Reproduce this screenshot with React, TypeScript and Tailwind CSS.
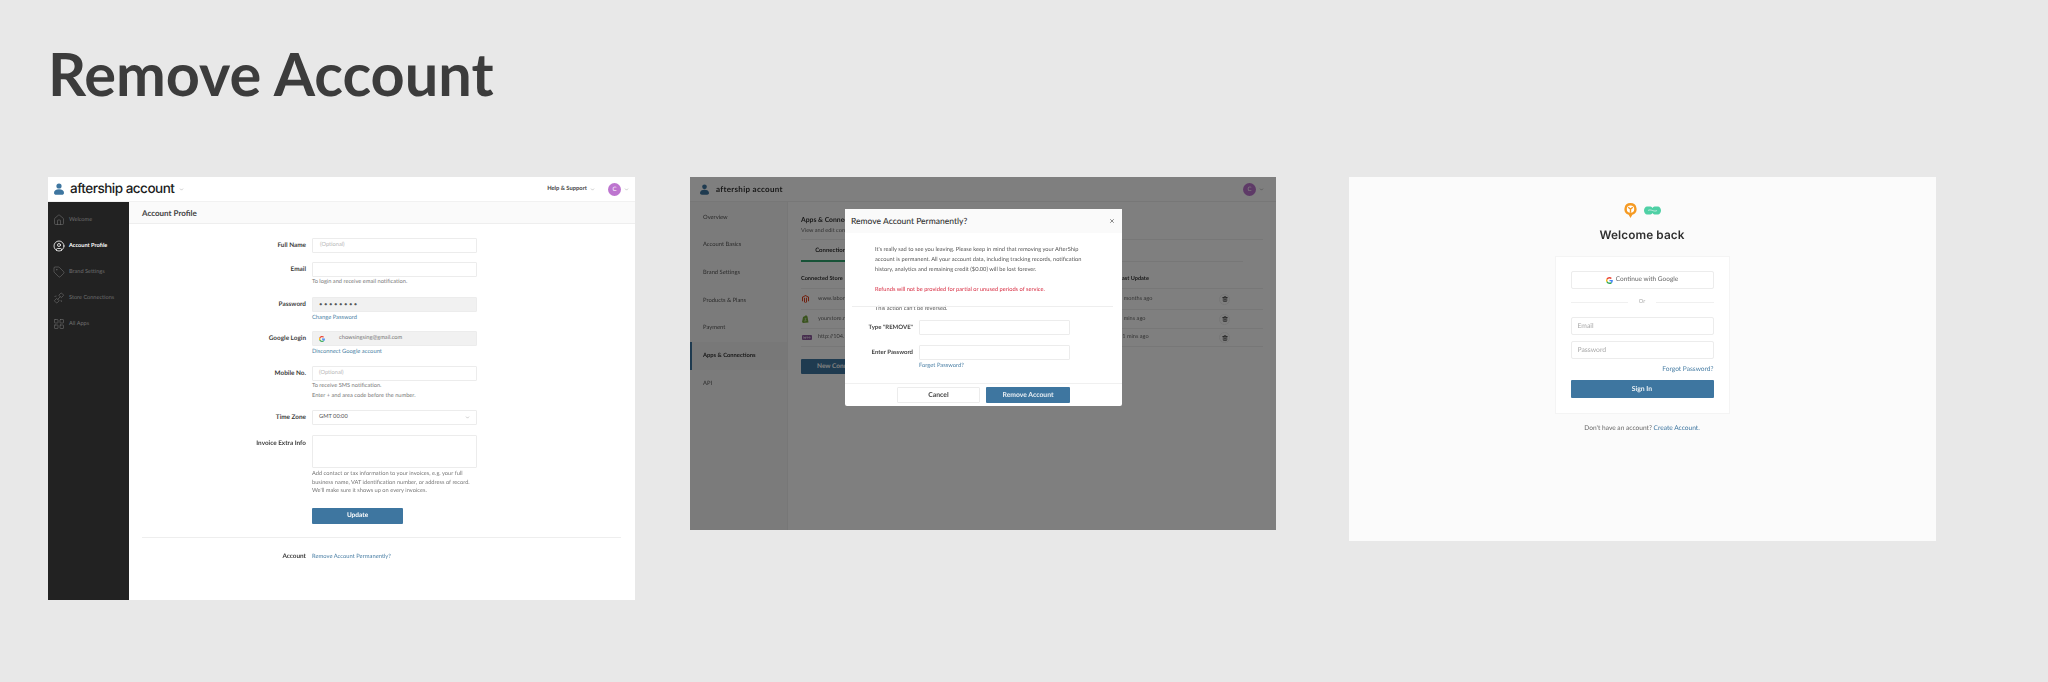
import React from "react";
import { ChevronDown, House, CircleUser, Tag, LayoutGrid, Trash2, X } from "lucide-react";

const Person = ({ className }: { className?: string }) => (
  <svg viewBox="0 0 20 24" className={className} fill="#3e76a0">
    <circle cx="10" cy="6" r="5.2" />
    <path d="M0 20c0-5 4-7.5 10-7.5S20 15 20 20c0 2.500-2 3.500-4 3.500H4C2 23.500 0 22.500 0 20z" />
  </svg>
);

const GoogleG = ({ className }: { className?: string }) => (
  <svg viewBox="0 0 48 48" className={className}>
    <path fill="#EA4335" d="M24 9.500c3.500 0 6.700 1.300 9.100 3.500l6.800-6.800C35.800 2.400 30.200 0 24 0 14.600 0 6.500 5.400 2.600 13.200l7.900 6.200C12.400 13.600 17.700 9.500 24 9.500z" />
    <path fill="#4285F4" d="M46.900 24.500c0-1.600-.2-3.100-.4-4.500H24v9h12.900c-.6 3-2.200 5.500-4.700 7.200l7.700 6c4.500-4.200 7-10.300 7-17.700z" />
    <path fill="#FBBC05" d="M10.500 28.600c-.5-1.400-.8-3-.8-4.600s.3-3.200.8-4.600l-7.900-6.200C.9 16.500 0 20.100 0 24s.9 7.500 2.600 10.800l7.900-6.200z" />
    <path fill="#34A853" d="M24 48c6.500 0 11.900-2.100 15.900-5.800l-7.700-6c-2.200 1.400-4.900 2.300-8.200 2.300-6.300 0-11.600-4.100-13.500-9.900l-7.900 6.200C6.500 42.600 14.600 48 24 48z" />
  </svg>
);

const StoreLink = ({ className, strokeWidth = 1.2 }: { className?: string; strokeWidth?: number }) => (
  <svg viewBox="0 0 24 24" className={className} fill="none" stroke="currentColor" strokeWidth={strokeWidth}>
    <rect x="13" y="3" width="7" height="7" rx="1" transform="rotate(45 16.500 6.500)" />
    <rect x="4" y="14" width="7" height="7" rx="1" transform="rotate(45 7.500 17.500)" />
    <path d="M9 15 15 9M3 9l4-1M16 16l1 4" />
  </svg>
);

const Chevron = ({ className }: { className?: string }) => <ChevronDown className={className} strokeWidth={2} />;

const Label = ({ children, top = "items-center" }: { children: React.ReactNode; top?: string }) => (
  <div className={`w-[177px] shrink-0 flex justify-end h-[15px] pt-px ${top} text-[6.400px] font-bold text-[#3a3a3a]`}>{children}</div>
);

const Help = ({ children }: { children: React.ReactNode }) => (
  <div className="text-[5.700px] leading-[10px] text-[#777]">{children}</div>
);

const LinkText = ({ children }: { children: React.ReactNode }) => (
  <div className="text-[5.800px] h-[10px] leading-[12px] text-[#4a7fa5]">{children}</div>
);

const Box = ({ children, gray }: { children?: React.ReactNode; gray?: boolean }) => (
  <div className={`w-[165px] h-[15px] rounded-[1px] border border-[#ececec] flex items-center text-[5.700px] ${gray ? "bg-[#f1f1f1] text-[#777]" : "bg-white text-[#b5b5b5]"}`}>
    {children}
  </div>
);

const Row = ({ label, children }: { label: string; children: React.ReactNode }) => (
  <div className="flex gap-[6px]">
    <Label>{label}</Label>
    <div className="flex flex-col">{children}</div>
  </div>
);

const navA = [
  { t: "Welcome", I: House },
  { t: "Account Profile", I: CircleUser, on: true },
  { t: "Brand Settings", I: Tag },
  { t: "Store Connections", I: StoreLink },
  { t: "All Apps", I: LayoutGrid },
];

const Profile = () => (
  <div className="w-[587px] h-[423px] bg-white flex flex-col shrink-0">
    <div className="h-[25px] flex items-center border-b border-[#f1f1f1] pl-[6px] pr-[6px]">
      <Person className="w-[10px] h-[12px]" />
      <span className="ml-[6px] pt-px text-[13.500px] tracking-[-0.5px] font-medium text-[#1c1c1c] font-['Inter',sans-serif]">aftership account</span>
      <Chevron className="ml-[5px] w-[5px] h-[5px] text-[#888]" />
      <span className="ml-auto text-[5.800px] font-bold text-[#444]">Help &amp; Support</span>
      <Chevron className="ml-[3px] w-[5px] h-[5px] text-[#888]" />
      <span className="ml-[13px] w-[13px] h-[13px] rounded-full bg-[#bd75cf] text-white text-[6px] flex items-center justify-center">C</span>
      <Chevron className="ml-[3px] w-[5px] h-[5px] text-[#888]" />
    </div>
    <div className="flex flex-1 min-h-0">
      <div className="w-[81px] bg-[#222222] flex flex-col pt-[5px]">
        {navA.map(({ t, I, on }) => (
          <div key={t} className={`h-[26px] flex items-center pl-[5px] gap-[4px] text-[5.600px] ${on ? "text-white font-bold" : "text-[#707070]"}`}>
            <I className="w-[12px] h-[12px]" strokeWidth={on ? 1.6 : 1.2} />
            <span>{t}</span>
          </div>
        ))}
      </div>
      <div className="flex-1 flex flex-col">
        <div className="h-[22px] pt-px bg-[#fafafa] border-b border-[#eeeeee] flex items-center pl-[13px] text-[8px] font-bold text-[#444]">Account Profile</div>
        <div className="flex flex-col gap-[9px] pt-[14px]">
          <Row label="Full Name"><Box><span className="pl-[7px]">(Optional)</span></Box></Row>
          <Row label="Email">
            <Box />
            <div className="pb-px"><Help>To login and receive email notification.</Help></div>
          </Row>
          <Row label="Password">
            <Box gray><span className="pl-[6px] text-[#555] text-[6px] tracking-[1.500px]">••••••••</span></Box>
            <LinkText>Change Password</LinkText>
          </Row>
          <Row label="Google Login">
            <Box gray>
              <GoogleG className="ml-[6px] w-[6px] h-[6px]" />
              <span className="ml-[14px]">chowsingsing@gmail.com</span>
            </Box>
            <div className="pb-px"><LinkText>Disconnect Google account</LinkText></div>
          </Row>
          <Row label="Mobile No.">
            <Box><span className="pl-[6px]">(Optional)</span></Box>
            <Help>To receive SMS notification.</Help>
            <Help>Enter + and area code before the number.</Help>
          </Row>
          <Row label="Time Zone">
            <Box><span className="pl-[6px] text-[#555]">GMT 00:00</span><Chevron className="ml-auto mr-[6px] w-[5px] h-[5px] text-[#888]" /></Box>
          </Row>
          <div className="flex gap-[6px] mt-[1px]">
            <Label top="items-start"><span className="mt-[3px]">Invoice Extra Info</span></Label>
            <div className="flex flex-col">
              <div className="w-[165px] h-[33px] border border-[#ececec] bg-white rounded-[1px]" />
              <div className="mt-[2px] w-[165px] text-[5.700px] leading-[8.700px] text-[#777]">
                Add contact or tax information to your invoices, e.g. your full<br />business name, VAT identification number, or address of record.<br />We'll make sure it shows up on every invoices.
              </div>
              <div className="mt-[12px] w-[91px] h-[16px] bg-[#3e76a0] rounded-[1px] flex items-center justify-center text-white text-[6.500px] font-bold">Update</div>
            </div>
          </div>
        </div>
        <div className="mt-[13px] ml-[13px] mr-[14px] h-px bg-[#eeeeee]" />
        <div className="flex gap-[6px] mt-[11px]">
          <Label>Account</Label>
          <div className="h-[15px] pt-px flex items-center text-[5.800px] text-[#4a7fa5]">Remove Account Permanently?</div>
        </div>
      </div>
    </div>
  </div>
);

const navB = ["Overview", "Account Basics", "Brand Settings", "Products & Plans", "Payment", "Apps & Connections", "API"];

const Magento = () => (
  <svg viewBox="0 0 14 16" className="w-[7px] h-[8px]">
    <path fill="#e2401d" d="M7 0 14 4v8l-2 1V5L7 2 2 5v8l-2-1V4z" />
    <path fill="#e2401d" d="M6 5v9l1 .8 1-.8V5l2 1v8l-3 2-3-2V6z" />
  </svg>
);
const Shopify = () => (
  <svg viewBox="0 0 14 16" className="w-[7px] h-[8px]">
    <path fill="#74a73c" d="M2 4 6 2c1-2 3-2 4 0l1 1 2 12-11 1-2-2z" />
    <path fill="none" stroke="#fff" strokeWidth="1.200" d="M8.500 7C7 6 5.500 7 6.500 8.500s2 2 .5 3.500c-1 .5-2 0-2.500-.5" />
  </svg>
);
const Woo = () => (
  <svg viewBox="0 0 20 12" className="w-[10px] h-[6px]">
    <rect width="20" height="10" rx="2" fill="#8e5c9f" />
    <path fill="none" stroke="#fff" strokeWidth="1" d="M3 3l1 4 2-3 1 3 1-4M10 5a1.200 1.200 0 1 0 2.400 0 1.200 1.200 0 1 0-2.400 0M14 5a1.200 1.200 0 1 0 2.400 0 1.200 1.200 0 1 0-2.400 0" />
  </svg>
);

const stores = [
  { t: "www.laborate.com", Ic: Magento, h: "h-[21px]", u: "3 months ago" },
  { t: "yourstore.myshopify.com", Ic: Shopify, h: "h-[19px]", u: "8 mins ago" },
  { t: "http://104.131.10.88", Ic: Woo, h: "h-[18px]", u: "11 mins ago" },
];

const Modal = () => (
  <div className="absolute left-[155px] top-[32px] w-[277px] h-[197px] bg-white rounded-[2px] flex flex-col">
    <div className="h-[24px] bg-[#fafafa] flex items-center pl-[6px] pr-[7px] text-[8.500px] font-medium text-[#333] shrink-0">
      Remove Account Permanently?
      <X className="ml-auto w-[6px] h-[6px] text-[#666]" strokeWidth={3} />
    </div>
    <div className="relative flex-1">
      <div className="pl-[30px] pr-[20px] pt-[12px] text-[5.700px] leading-[9.800px] text-[#555]">
        <p>It's really sad to see you leaving. Please keep in mind that removing your AfterShip<br />account is permanent. All your account data, including tracking records, notification<br />history, analytics and remaining credit ($0.00) will be lost forever.</p>
        <p className="mt-[10.500px] text-[#d6263c]">Refunds will not be provided for partial or unused periods of service.</p>
        <p className="mt-[9px]">This action can't be reversed.</p>
      </div>
      <div className="absolute left-[7px] right-[9px] top-[73px] h-px bg-[#eeeeee]" />
      <div className="flex flex-col gap-[9.500px] mt-[7px]">
        <div className="flex gap-[6px] items-center">
          <div className="w-[68px] text-right text-[6px] font-bold text-[#444]">Type "REMOVE"</div>
          <div className="w-[151px] h-[15px] border border-[#ececec] rounded-[1px]" />
        </div>
        <div className="flex flex-col">
          <div className="flex gap-[6px] items-center">
            <div className="w-[68px] text-right text-[6px] font-bold text-[#444]">Enter Password</div>
            <div className="w-[151px] h-[15px] border border-[#ececec] rounded-[1px]" />
          </div>
          <div className="ml-[74px] text-[5.800px] leading-[11px] text-[#4a7fa5]">Forget Password?</div>
        </div>
      </div>
    </div>
    <div className="h-[23px] border-t border-[#f0f0f0] flex items-center justify-center gap-[6px] px-[5px] shrink-0">
      <div className="w-[83px] h-[16px] border border-[#ececec] rounded-[1px] flex items-center justify-center text-[6.800px] font-bold text-[#444]">Cancel</div>
      <div className="w-[84px] h-[16px] bg-[#3e76a0] rounded-[1px] flex items-center justify-center text-[6.800px] font-bold text-[#e8eef3]">Remove Account</div>
    </div>
  </div>
);

const Connections = () => (
  <div className="relative w-[586px] h-[353px] bg-white shrink-0 overflow-hidden flex flex-col">
    <div className="h-[25px] flex items-center border-b border-[#eee] pl-[10px] pr-[12px] shrink-0">
      <Person className="w-[9px] h-[11px]" />
      <span className="ml-[7px] text-[8px] font-bold tracking-[0.3px] text-[#333]">aftership account</span>
      <span className="ml-auto w-[13px] h-[13px] rounded-full bg-[#bd75cf] text-white text-[6px] flex items-center justify-center">C</span>
      <Chevron className="ml-[3px] w-[5px] h-[5px] text-[#666]" />
    </div>
    <div className="flex flex-1">
      <div className="w-[98px] bg-[#f7f7f7] border-r border-[#eee] flex flex-col pt-[2px] shrink-0">
        {navB.map((t) => (
          <div key={t} className={`h-[27.700px] flex items-center text-[5.800px] ${t === "Apps & Connections" ? "font-bold text-[#333] bg-[#f0f0f0] border-l-2 border-[#3e76a0] pl-[11px]" : "pl-[13px] text-[#555]"}`}>{t}</div>
        ))}
      </div>
      <div className="flex-1 flex flex-col pl-[13px] pr-[13px] pt-[14px]">
        <div className="text-[6.800px] leading-[9px] font-bold text-[#333]">Apps &amp; Connections</div>
        <div className="text-[5.600px] leading-[11px] text-[#666] border-b border-[#eee] pb-[3px]">View and edit connections</div>
        <div className="h-[22px] border-b border-[#eee] flex mr-[20px]">
          <div className="w-[62px] border-b-2 border-[#2ea56f] flex items-center justify-center text-[6px] font-bold text-[#333] h-[22px]">Connections</div>
        </div>
        <div className="h-[27px] border-b border-[#eee] flex items-end pb-[6px] text-[5.600px] leading-[7px] font-bold text-[#333]">
          <span className="w-[318px]">Connected Store</span>
          <span>Last Update</span>
        </div>
        {stores.map((s) => (
          <div key={s.t} className={`${s.h} border-b border-[#eee] flex items-center text-[5.600px] text-[#666]`}>
            <span className="w-[17px] pl-[1px]"><s.Ic /></span>
            <span className="w-[301px]">{s.t}</span>
            <span className="w-[100px]">{s.u}</span>
            <span className="w-[11px] h-[11px] rounded-full border border-[#eee] flex items-center justify-center">
              <Trash2 className="w-[6px] h-[6px] text-[#333]" strokeWidth={2.5} />
            </span>
          </div>
        ))}
        <div className="mt-[12px] w-[91px] h-[15px] bg-[#3e76a0] rounded-[1px] flex items-center pl-[16px] text-[6.500px] font-bold text-white">New Connection</div>
      </div>
    </div>
    <div className="absolute inset-0 bg-black/50" />
    <Modal />
  </div>
);

const PlainInput = ({ text }: { text: string }) => (
  <div className="h-[18px] border border-[#ececec] rounded-[2px] flex items-center pl-[6px] text-[6.800px] text-[#a8a8a8]">{text}</div>
);

const Login = () => (
  <div className="ml-[18px] w-[587px] h-[364px] bg-[#fbfbfb] shrink-0 flex flex-col items-center pt-[27px] pr-[1px]">
    <div className="flex items-center gap-[7px] h-[13px]">
      <svg viewBox="0 0 14 16" className="w-[13px] h-[15px]">
        <path fill="#f59a23" d="M7 0a6.500 6.500 0 0 1 2 12.700L7 16l-2-3.300A6.500 6.500 0 0 1 7 0z" />
        <circle cx="7" cy="6.500" r="4" fill="#fff" />
        <path fill="none" stroke="#f59a23" strokeWidth="1.500" d="M4.500 4.500 7 6.500l2.500-2M7 6.500v4" />
      </svg>
      <svg viewBox="0 0 34 18" className="w-[17px] h-[9px]">
        <path fill="#4fd0a5" d="M6 1h7c2 0 3 2 4 3 1-1 2-3 4-3h7c3 0 6 4 6 8s-3 8-6 8h-7c-2 0-3-2-4-3-1 1-2 3-4 3H6c-3 0-6-4-6-8s3-8 6-8z" />
        <path fill="none" stroke="#fbfbfb" strokeWidth="1.200" d="M8 9c5-4 13 4 18 0" />
      </svg>
    </div>
    <div className="mt-[10px] text-[11.800px] leading-[17px] font-semibold tracking-[0.1px] text-[#2f2f2f] font-['Inter',sans-serif]">Welcome back</div>
    <div className="mt-[12px] w-[175px] h-[158px] bg-white border border-[#f4f4f4] px-[15px] pt-[14px] flex flex-col">
      <div className="h-[18px] border border-[#ececec] rounded-[2px] flex items-center justify-center gap-[3px] text-[6.500px] text-[#666]">
        <GoogleG className="w-[7px] h-[7px]" />
        Continue with Google
      </div>
      <div className="mt-[8px] h-[11px] flex items-center gap-[11px] text-[5.600px] text-[#aaa]">
        <span className="flex-1 h-px bg-[#f0f0f0]" />Or<span className="flex-1 h-px bg-[#f0f0f0]" />
      </div>
      <div className="mt-[9px]"><PlainInput text="Email" /></div>
      <div className="mt-[6px]"><PlainInput text="Password" /></div>
      <div className="mt-[5px] h-[11px] text-right text-[6.600px] leading-[11px] text-[#4a7fa5]">Forgot Password?</div>
      <div className="mt-[5px] h-[18px] bg-[#3e76a0] rounded-[1px] flex items-center justify-center text-[6.800px] font-bold text-[#eef3f7]">Sign In</div>
    </div>
    <div className="mt-[10px] text-[6.600px] text-[#666]">Don't have an account? <span className="text-[#3e76a0]">Create Account.</span></div>
  </div>
);

export default function App() {
  return (
    <div className="w-[2048px] h-[682px] overflow-hidden bg-[#e8e8e8] font-['Lato',sans-serif] [text-rendering:geometricPrecision]">
      <h1 className="pl-[48px] pt-[35px] h-[177px] text-[59.500px] leading-[76px] font-bold text-[#3c3c3c]">Remove Account</h1>
      <div className="flex items-start pl-[48px] gap-[55px] blur-[0.3px]">
        <Profile />
        <Connections />
        <Login />
      </div>
    </div>
  );
}
